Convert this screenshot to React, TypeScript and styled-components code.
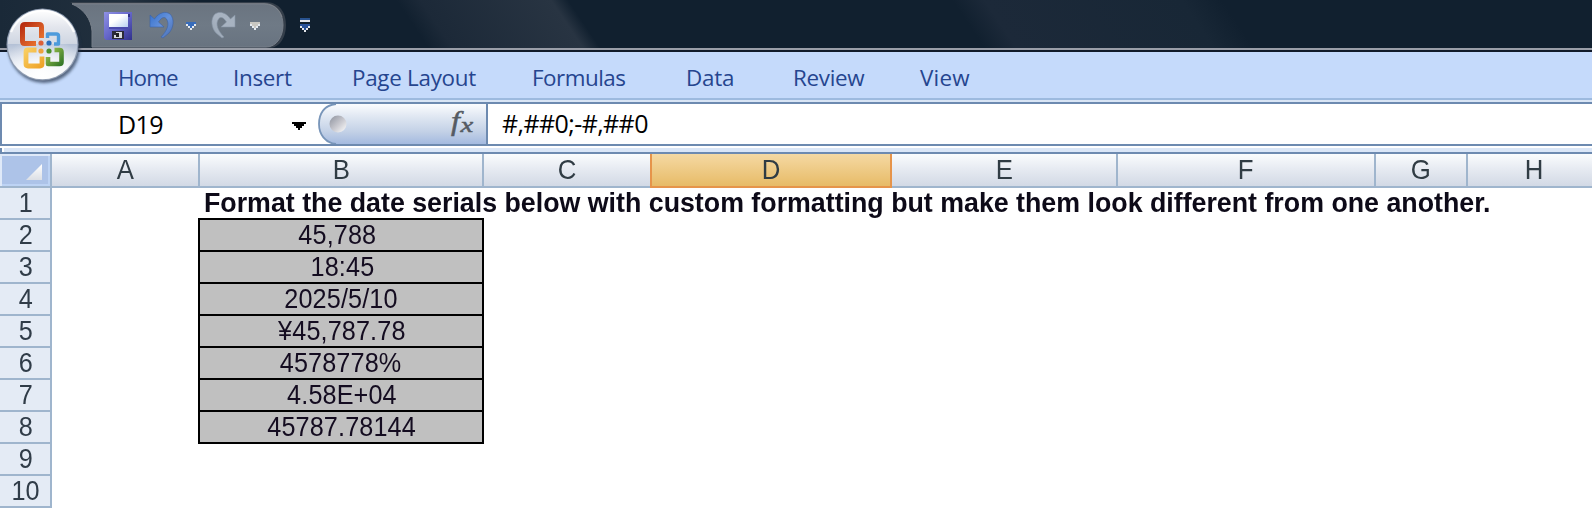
import React from "react";
import styled, { createGlobalStyle } from "styled-components";

const Global = createGlobalStyle`
  * { box-sizing: border-box; }
  body { margin: 0; background: #fff; overflow: hidden; }
`;

const Window = styled.div`
  position: relative;
  width: 1592px;
  height: 508px;
  overflow: hidden;
  background: #fff;
  display: flex;
  flex-direction: column;
`;

const TitleBar = styled.header`
  position: relative;
  flex: none;
  height: 52px;
  background: #11202f;
  border-bottom: 2px solid #111a29;
  box-shadow: inset 0 -2px 0 #9a9ea8;
`;

const Backdrop = styled.svg`
  position: absolute;
  left: 0;
  top: 0;
`;

const QuickAccess = styled.div`
  position: relative;
  display: flex;
  align-items: flex-start;
  height: 48px;
  padding: 11px 0 0 104px;
`;

const Glyph = styled.svg<{ $ml?: number; $mt?: number }>`
  flex: none;
  margin-left: ${(p) => p.$ml ?? 0}px;
  margin-top: ${(p) => p.$mt ?? 0}px;
  display: block;
`;

const OfficeButton = styled.svg`
  position: absolute;
  left: 0;
  top: 0;
`;

const Ribbon = styled.nav`
  flex: none;
  height: 50px;
  background: #c5dafb;
  border-bottom: 2px solid #d9e5f5;
  box-shadow: inset 0 -2px 0 #9dbadf;
  display: flex;
`;

const Tab = styled.span<{ $w: number; $ls: number }>`
  width: ${(p) => p.$w}px;
  padding-top: 10px;
  font: 22.4px/32px "Open Sans", sans-serif;
  letter-spacing: ${(p) => p.$ls}px;
  color: #25458f;
  white-space: nowrap;
  &:first-child { margin-left: 118px; }
`;

const FormulaBar = styled.section`
  flex: none;
  height: 44px;
  display: flex;
  border: 2px solid #6d8ab0;
  border-right: 0;
`;

const NameBox = styled.div`
  width: 316px;
  display: flex;
  align-items: center;
`;

const BarText = styled.span<{ $ml: number; $ls: number }>`
  margin-left: ${(p) => p.$ml}px;
  font: 25px/38px "Open Sans", sans-serif;
  letter-spacing: ${(p) => p.$ls}px;
  color: #000;
`;

const FunctionArea = styled.div`
  width: 170px;
  height: 40px;
  border-right: 2px solid #6d8ab0;
`;

const Gap = styled.div`
  flex: none;
  height: 8px;
  background: #dae6f7;
  border-top: 2px solid #fff;
  border-bottom: 2px solid #6d8ab0;
  box-shadow: inset 2px 0 0 #6d8ab0, inset 4px 0 0 #fff;
`;

const Sheet = styled.main`
  display: grid;
  grid-template-columns: 52px 148px 284px 168px 240px 226px 258px 92px 134px;
  grid-template-rows: 34px repeat(10, 32px);
`;

const Corner = styled.div`
  border: 2px solid #9fb5cd;
  border-left: 0;
  border-top: 0;
  padding: 2px 0 0 2px;
  background: #dfe9f8;
  svg { display: block; }
`;

const ColumnHead = styled.div<{ $active?: boolean }>`
  border-right: 2px solid ${(p) => (p.$active ? "#e6944a" : "#9fb5cd")};
  border-bottom: 2px solid ${(p) => (p.$active ? "#e6944a" : "#9fb5cd")};
  background: ${(p) => (p.$active ? "linear-gradient(#f5d9a3, #e7bb67)" : "linear-gradient(#fafcfd, #e7ebf2 45%, #d2d9e5)")};
  ${(p) => (p.$active ? "margin-left: -2px; border-left: 2px solid #e6944a;" : "")}
  font: 28px/32px "Liberation Sans", Arial, sans-serif;
  text-align: center;
  color: #303c44;
`;

const Narrow = styled.span<{ $scale: number; $ls?: number; $origin?: string }>`
  display: inline-block;
  transform: scaleX(${(p) => p.$scale});
  transform-origin: ${(p) => p.$origin ?? "center"};
  letter-spacing: ${(p) => p.$ls ?? 0}px;
`;

const RowHead = styled.div`
  grid-column: 1;
  border-right: 2px solid #9fb5cd;
  border-bottom: 2px solid #9fb5cd;
  background: #e4ebf5;
  padding-left: 1px;
  font: 28px/30px "Liberation Sans", Arial, sans-serif;
  text-align: center;
  color: #303c48;
`;

const Heading = styled.div`
  grid-column: 3 / -1;
  padding-left: 4px;
  font: bold 28px/30px "Liberation Sans", Arial, sans-serif;
  color: #0d0a18;
  white-space: nowrap;
`;

const ValueCell = styled.div<{ $shift: number }>`
  grid-column: 3;
  margin: -2px 0 0 -2px;
  border: 2px solid #000;
  background: #c0c0c0;
  padding-left: 2px;
  padding-right: ${(p) => p.$shift}px;
  font: 28px/30px "Liberation Sans", Arial, sans-serif;
  text-align: center;
  color: #140c20;
`;

const tabs = [
  { name: "Home", w: 115, ls: -0.9 },
  { name: "Insert", w: 119, ls: -0.3 },
  { name: "Page Layout", w: 180, ls: -0.28 },
  { name: "Formulas", w: 154, ls: -0.5 },
  { name: "Data", w: 107, ls: -0.2 },
  { name: "Review", w: 127, ls: -0.3 },
  { name: "View", w: 80, ls: 0.2 },
];

const columns = ["A", "B", "C", "D", "E", "F", "G", "H"];

const values = [
  { text: "45,788", shift: 9 },
  { text: "18:45", shift: 0 },
  { text: "2025/5/10", shift: 2 },
  { text: "¥45,787.78", shift: 0 },
  { text: "4578778%", shift: 2 },
  { text: "4.58E+04", shift: 0 },
  { text: "45787.78144", shift: 0 },
];

function TitleBackdrop() {
  return (
    <Backdrop width="1592" height="48" viewBox="0 0 1592 48">
      <defs>
        <linearGradient id="s0" x1="0" x2="1"><stop offset="0" stopColor="#1a2938" /><stop offset=".65" stopColor="#22303e" /><stop offset="1" stopColor="#11202f" /></linearGradient>
        <linearGradient id="s1" x1="0" x2="1"><stop offset="0" stopColor="#11202f" /><stop offset=".14" stopColor="#1c2938" /><stop offset=".9" stopColor="#283442" /><stop offset="1" stopColor="#11202f" /></linearGradient>
        <linearGradient id="s2" x1="0" x2="1"><stop offset="0" stopColor="#11202f" /><stop offset=".12" stopColor="#1c2939" /><stop offset=".85" stopColor="#182736" /><stop offset="1" stopColor="#11202f" /></linearGradient>
        <linearGradient id="pill" x1="0" x2="0" y1="0" y2="1"><stop offset="0" stopColor="#6a7480" /><stop offset=".5" stopColor="#6f7a86" /><stop offset="1" stopColor="#687380" /></linearGradient>
      </defs>
      <rect width="200" height="48" fill="url(#s0)" />
      <g transform="skewX(34)">
        <rect x="396" width="172" height="48" fill="url(#s1)" />
        <rect x="952" width="270" height="48" fill="url(#s2)" />
      </g>
      <path d="M70 2H265C280 2 286 13 286 25S280 48 269 48H92V31C91 18 84 8 70 2Z" fill="#343e4a" />
      <path d="M72 4H264C277 4 283 14 283 25S277 47 266 47H92V31C91 19 84 9 72 4Z" fill="url(#pill)" stroke="#777f89" strokeWidth="1" />
      <path d="M72 3.500H264C275 4 280 11 282 17" fill="none" stroke="#85898f" strokeWidth="1.2" opacity=".6" />
    </Backdrop>
  );
}

function SaveIcon() {
  return (
    <Glyph width="28" height="29" viewBox="0 0 28 29" $mt={1}>
      <defs><linearGradient id="disk" x1="0" y1="0" x2="1" y2="1"><stop offset="0" stopColor="#8f91e4" /><stop offset=".5" stopColor="#6465c8" /><stop offset="1" stopColor="#30308c" /></linearGradient>
      <linearGradient id="label" x1="0" y1="0" x2="1" y2="1"><stop offset=".4" stopColor="#fff" /><stop offset="1" stopColor="#b9d0f1" /></linearGradient></defs>
      <path d="M0 0H28V28H2L0 26Z" fill="url(#disk)" />
      <path d="M5 2H24V15H5Z" fill="url(#label)" />
      <path d="M5 15H24V17H5Z" fill="#4a4aac" />
      <path d="M8 19H20V27H8Z" fill="#2b2b37" />
      <path d="M12 20H18V26H10V23H12Z" fill="#d6d9dd" />
      <path d="M12 21H15V25H12Z" fill="#222" />
      <path d="M24 2H26V5H24Z" fill="#31318c" />
    </Glyph>
  );
}

function UndoIcon({ redo }: { redo?: boolean }) {
  const id = redo ? "redo" : "undo";
  return (
    <Glyph width="26" height="28" viewBox="0 0 26 28" $ml={redo ? 14 : 17}>
      <defs><linearGradient id={id} x1="0" x2="1" y2="1"><stop stopColor={redo ? "#a5b1bf" : "#3470cb"} /><stop offset=".5" stopColor={redo ? "#a9b4c2" : "#6592dc"} /><stop offset="1" stopColor={redo ? "#98a4b3" : "#4a6db0"} /></linearGradient></defs>
      <g transform={redo ? "translate(26 0) scale(-1 1)" : undefined}>
        <path d="M1 4L5.500 8C10 1 17 0 21 3C26 8 24.500 17 20 22L14 27L12 26C18 20 21 13 17.500 8C15 5 12 7 9.500 11L15 16H1Z" fill={`url(#${id})`} stroke={redo ? "#8794a4" : "#3a62a6"} strokeWidth=".6" />
      </g>
    </Glyph>
  );
}

function Arrow({ fill, ml }: { fill: string; ml: number }) {
  return (
    <Glyph width="10" height="8" viewBox="0 0 10 8" $ml={ml} $mt={11} shapeRendering="crispEdges">
      <path d="M0 0H10V4H8V6H6V8H4V6H2V4H0Z" fill="#e4e9ef" />
      <path d="M0 0H10V2H8V4H6V6H4V4H2V2H0Z" fill={fill} />
    </Glyph>
  );
}

function CustomizeIcon() {
  return (
    <Glyph width="10" height="14" viewBox="0 0 10 14" $ml={40} $mt={7} shapeRendering="crispEdges">
      <path d="M0 0H10V2H0Z" fill="#28528f" /><path d="M0 2H10V4H0Z" fill="#e4e6eb" />
      <path d="M0 6H10V10H8V12H6V14H4V12H2V10H0Z" fill="#e4e6eb" />
      <path d="M0 6H10V8H8V10H6V12H4V10H2V8H0Z" fill="#28529a" />
    </Glyph>
  );
}

function OfficeOrb() {
  return (
    <OfficeButton width="90" height="92" viewBox="0 0 90 92">
      <defs>
        <linearGradient id="orb" x1="0" x2="0" y1="0" y2="1"><stop offset="0" stopColor="#fff" /><stop offset=".25" stopColor="#e3e6ed" /><stop offset=".49" stopColor="#cfd6e2" /><stop offset=".5" stopColor="#b4c1d6" /><stop offset=".75" stopColor="#e4e9f2" /><stop offset="1" stopColor="#fff" /></linearGradient>
        <radialGradient id="shine" cx=".5" cy=".95" r=".6"><stop stopColor="#fff" /><stop offset="1" stopColor="#fff" stopOpacity="0" /></radialGradient>
        <linearGradient id="red" x1="0" y1="0" x2="1" y2="1"><stop stopColor="#b72d12" /><stop offset="1" stopColor="#ed7a32" /></linearGradient>
        <linearGradient id="yellow" x1="0" y1="0" x2="1" y2="1"><stop stopColor="#f8cd60" /><stop offset="1" stopColor="#efa42a" /></linearGradient>
        <linearGradient id="green" x1="0" y1="0" x2="1" y2="1"><stop stopColor="#9bc04b" /><stop offset="1" stopColor="#367929" /></linearGradient>
        <filter id="shadow"><feGaussianBlur stdDeviation="1.6" /></filter>
      </defs>
      <circle cx="44" cy="47" r="36" fill="#25364d" opacity=".7" filter="url(#shadow)" />
      <circle cx="42.5" cy="44.5" r="36" fill="#8e9bb0" />
      <circle cx="42.5" cy="44.5" r="34.8" fill="url(#orb)" />
      <circle cx="42.5" cy="44.5" r="34" fill="url(#shine)" />
      <path d="M11 32A34 34 0 0 1 74 32" fill="none" stroke="#fff" strokeWidth="2.4" opacity=".85" />
      <g fill="none" strokeLinejoin="round">
        <path d="M36 43.500H24.500Q22.500 43.500 22.500 41V27Q22.500 24.500 25 24.500H39Q41.500 24.500 41.500 27V38" stroke="url(#red)" strokeWidth="5" />
        <path d="M47.500 38V34H56.500Q58.500 34 58.500 36V44H54" stroke="#4d9bdc" strokeWidth="3.4" />
        <path d="M36.500 50H28Q26 50 26 52V64Q26 66 28 66H40Q42 66 42 64V56.500" stroke="url(#yellow)" strokeWidth="4.8" />
        <path d="M48 57V64H59.500Q61.500 64 61.500 62V52Q61.500 50 59.500 50H54.500" stroke="url(#green)" strokeWidth="4.6" />
      </g>
      <circle cx="41" cy="43" r="2.6" fill="#dd6037" />
      <circle cx="49" cy="43" r="2.6" fill="#296fbd" />
      <circle cx="41" cy="51" r="2.6" fill="#eda33c" />
      <circle cx="49" cy="51" r="2.6" fill="#4b912d" />
    </OfficeButton>
  );
}

function FunctionPlate() {
  return (
    <Glyph width="168" height="40" viewBox="0 0 168 40">
      <defs>
        <linearGradient id="plate" x1="0" x2="0" y1="0" y2="1"><stop offset="0" stopColor="#fbfcfe" /><stop offset=".35" stopColor="#dde5f1" /><stop offset=".7" stopColor="#c2d0e6" /><stop offset="1" stopColor="#a4bae0" /></linearGradient>
        <linearGradient id="knob" x1="0" y1="0" x2="1" y2="1"><stop stopColor="#8c919d" /><stop offset=".55" stopColor="#cbcbd1" /><stop offset="1" stopColor="#fff" /></linearGradient>
      </defs>
      <path d="M168 0H18C6 1 1 10 1 20S7 39 18 40H168Z" fill="url(#plate)" />
      <path d="M18 0C6 1 1 10 1 20S7 39 18 40" fill="none" stroke="#7895b9" strokeWidth="1.8" />
      <circle cx="20" cy="20" r="8.500" fill="url(#knob)" />
      <g fontFamily="Liberation Serif, serif" fontStyle="italic" fill="#555b63" stroke="#555b63" strokeWidth=".5">
        <text transform="translate(133 26) scale(1.15 1)" fontSize="28">f</text>
        <text transform="translate(142.500 28) scale(1.3 1)" fontSize="22">x</text>
      </g>
    </Glyph>
  );
}

export default function App() {
  return (
    <Window>
      <Global />
      <TitleBar>
        <TitleBackdrop />
        <QuickAccess>
          <SaveIcon />
          <UndoIcon />
          <Arrow fill="#386cba" ml={11} />
          <UndoIcon redo />
          <Arrow fill="#c9c7c1" ml={14} />
          <CustomizeIcon />
        </QuickAccess>
      </TitleBar>
      <Ribbon>
        {tabs.map((t) => <Tab key={t.name} $w={t.w} $ls={t.ls}>{t.name}</Tab>)}
      </Ribbon>
      <FormulaBar>
        <NameBox>
          <BarText $ml={116} $ls={-0.6}>D19</BarText>
          <Glyph width="14" height="8" viewBox="0 0 14 8" $ml={129} $mt={4} shapeRendering="crispEdges">
            <path d="M0 0H14V2H12V4H10V6H8V8H6V6H4V4H2V2H0Z" />
          </Glyph>
        </NameBox>
        <FunctionArea><FunctionPlate /></FunctionArea>
        <BarText $ml={14} $ls={-0.6}>#,##0;-#,##0</BarText>
      </FormulaBar>
      <Gap />
      <Sheet>
        <Corner>
          <svg width="48" height="30" viewBox="0 0 48 30">
            <defs><linearGradient id="tri" x1="0" y1="0" x2="0" y2="1"><stop stopColor="#fff" /><stop offset="1" stopColor="#dcdfe5" /></linearGradient></defs>
            <path d="M0 0H46V28H0Z" fill="#adc3e8" />
            <path d="M0 28H46V0H48V30H0Z" fill="#bdd3f4" />
            <path d="M40 8V24H24Z" fill="url(#tri)" />
          </svg>
        </Corner>
        {columns.map((c) => <ColumnHead key={c} $active={c === "D"}><Narrow $scale={0.92}>{c}</Narrow></ColumnHead>)}
        <RowHead><Narrow $scale={0.9}>1</Narrow></RowHead>
        <Heading>
          <Narrow $scale={0.956} $origin="left">
            Format the date serials below with custom formatting but make them look different from one another.
          </Narrow>
        </Heading>
        {values.map((v, i) => (
          <React.Fragment key={v.text}>
            <RowHead><Narrow $scale={0.9}>{i + 2}</Narrow></RowHead>
            <ValueCell $shift={v.shift}><Narrow $scale={0.9} $ls={0.15}>{v.text}</Narrow></ValueCell>
          </React.Fragment>
        ))}
        <RowHead><Narrow $scale={0.9}>9</Narrow></RowHead>
        <RowHead><Narrow $scale={0.9}>10</Narrow></RowHead>
      </Sheet>
      <OfficeOrb />
    </Window>
  );
}
